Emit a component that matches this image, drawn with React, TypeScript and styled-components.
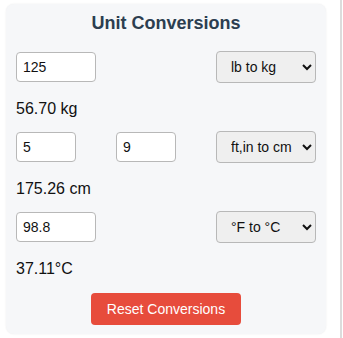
import { useState } from "react";
import styled, { createGlobalStyle } from "styled-components";

const GlobalStyle = createGlobalStyle`
  html, body {
    margin: 0;
    padding: 0;
    background: #fff;
    font-family: "Liberation Sans", Arial, sans-serif;
  }
`;

const App = () => {
  const [lb, setLb] = useState("125");
  const [ft, setFt] = useState("5");
  const [inch, setInch] = useState("9");
  const [fahr, setFahr] = useState("98.8");

  const kg = (parseFloat(lb) * 0.45359237).toFixed(2);
  const cm = ((parseFloat(ft) * 12 + parseFloat(inch)) * 2.54).toFixed(2);
  const celsius = (((parseFloat(fahr) - 32) * 5) / 9).toFixed(2);

  const reset = () => {
    setLb("");
    setFt("");
    setInch("");
    setFahr("");
  };

  return (
    <Page>
      <GlobalStyle />
      <Card>
        <Title>Unit Conversions</Title>

        <Row>
          <NumberInput $width={80} value={lb} onChange={(e) => setLb(e.target.value)} />
          <Select defaultValue="lbkg">
            <option value="lbkg">lb to kg</option>
          </Select>
        </Row>
        <Result>{kg} kg</Result>

        <Row>
          <NumberInput $width={60} value={ft} onChange={(e) => setFt(e.target.value)} />
          <NumberInput $width={60} value={inch} onChange={(e) => setInch(e.target.value)} />
          <Select defaultValue="ftcm">
            <option value="ftcm">ft,in to cm</option>
          </Select>
        </Row>
        <Result>{cm} cm</Result>

        <Row>
          <NumberInput $width={80} value={fahr} onChange={(e) => setFahr(e.target.value)} />
          <Select defaultValue="fc">
            <option value="fc">°F to °C</option>
          </Select>
        </Row>
        <Result>{celsius}°C</Result>

        <ButtonWrapper>
          <ResetButton onClick={reset}>Reset Conversions</ResetButton>
        </ButtonWrapper>
      </Card>
    </Page>
  );
};

export default App;

const Page = styled.div`
  width: 342px;
  height: 338px;
  box-sizing: border-box;
  border-right: 2px solid #dcdcdc;
  padding: 4px 0 0 6px;
`;

const Card = styled.div`
  width: 320px;
  height: 330px;
  box-sizing: border-box;
  padding: 9px 10px;
  background-color: #f6f7f9;
  border-radius: 8px;
  box-shadow: 0 0 2px rgba(0, 0, 0, 0.08);
`;

const Title = styled.h2`
  margin: 0 0 17px;
  font-size: 18px;
  line-height: 21px;
  font-weight: 700;
  text-align: center;
  color: #2c3e50;
`;

const Row = styled.div`
  display: flex;
  align-items: center;
  justify-content: space-between;
  height: 32px;
`;

const NumberInput = styled.input<{ $width: number }>`
  width: ${(p) => p.$width}px;
  height: 30px;
  box-sizing: border-box;
  padding: 0 6px;
  border: 1px solid #b8b8b8;
  border-radius: 4px;
  background: #fff;
  font-family: "Liberation Sans", Arial, sans-serif;
  font-size: 14px;
  color: #111;
  outline: none;
`;

const Select = styled.select`
  width: 100px;
  height: 32px;
  box-sizing: border-box;
  padding: 0 4px 0 10px;
  border: 1px solid #b8b8b8;
  border-radius: 4px;
  background-color: #efefef;
  font-family: "Liberation Sans", Arial, sans-serif;
  font-size: 14px;
  color: #111;
`;

const Result = styled.p`
  margin: 17px 0 13px;
  font-size: 16px;
  line-height: 18px;
  color: #111;
`;

const ButtonWrapper = styled.div`
  display: flex;
  justify-content: center;
  margin-top: 15px;
`;

const ResetButton = styled.button`
  width: 150px;
  height: 32px;
  border: none;
  border-radius: 4px;
  background-color: #e74c3c;
  color: #fff;
  font-family: "Liberation Sans", Arial, sans-serif;
  font-size: 14px;
  cursor: pointer;
`;
